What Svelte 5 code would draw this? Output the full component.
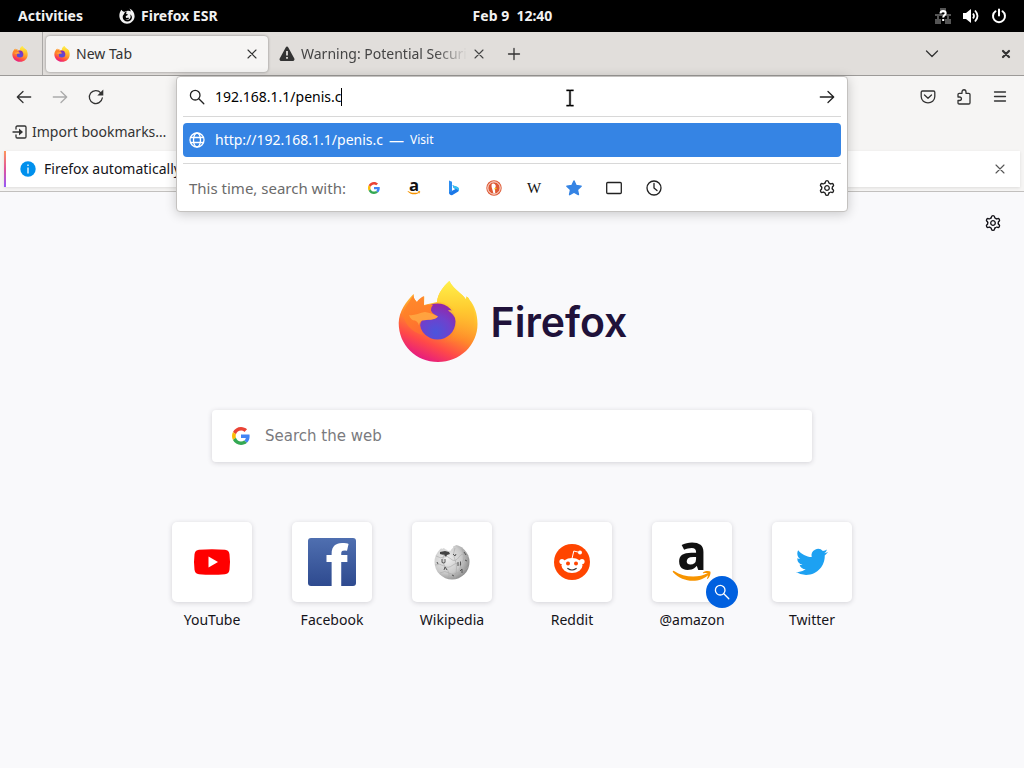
<script>
  let address = $state('192.168.1.1/penis.c')
  let query = $state('')

  const engines = ['Google', 'Amazon', 'Bing', 'DuckDuckGo', 'Wikipedia', 'Bookmarks', 'Tabs', 'History']
  const sites = ['YouTube', 'Facebook', 'Wikipedia', 'Reddit', '@amazon', 'Twitter']
  const teeth = [0, 60, 120, 180, 240, 300]
</script>


{#snippet firefox(size)}
  <svg width={size} height={size} viewBox="0 0 80 82" aria-hidden="true">
    <defs>
      <linearGradient id="flame" x1=".75" y1="0" x2=".3" y2="1">
        <stop offset="0" stop-color="#fff44f" />
        <stop offset=".32" stop-color="#ffc22e" />
        <stop offset=".58" stop-color="#ff8a2a" />
        <stop offset=".78" stop-color="#ff4a48" />
        <stop offset="1" stop-color="#e31587" />
      </linearGradient>
      <radialGradient id="globe" cx=".45" cy=".8" r=".8">
        <stop offset="0" stop-color="#4a55dc" />
        <stop offset=".55" stop-color="#7040cc" />
        <stop offset="1" stop-color="#9426a8" />
      </radialGradient>
      <linearGradient id="fox" x1=".2" y1="0" x2=".4" y2="1">
        <stop offset="0" stop-color="#ff8a2e" />
        <stop offset=".5" stop-color="#ff8028" />
        <stop offset="1" stop-color="#ff6a34" />
      </linearGradient>
      <linearGradient id="tail" x1=".5" y1="0" x2=".5" y2="1">
        <stop offset="0" stop-color="#fff04a" />
        <stop offset=".45" stop-color="#ffcb30" />
        <stop offset="1" stop-color="#ff8f2c" stop-opacity="0" />
      </linearGradient>
    </defs>
    <path fill="url(#flame)" d="M15.500 13C8 21 1 30 .7 42c0 22 17.300 39 39.300 39s39.500-17 39.500-38c0-10-3-19-8-24-.5-2-2-3-3-3.500l-.5 3C64 12 57 10 51.300 0 45 6 40 12 39 21l-13 3 .3-8.500c-3 1.500-5.500 3.500-7 6-2.500-2.500-4-5-3.800-8.500z" />
    <circle fill="url(#globe)" cx="39.500" cy="40.500" r="18" />
    <path fill="url(#tail)" d="M51.300 0C45 6 40 12 39 21c7-.5 13 2.500 18 9-3-1-5-1-7-.5 8 5 10 13 8 19-3 9-9 12-16 12.500 14 5 30-3 34-18 2-11-1-19-4.500-24-.5-2-2-3-3-3.500l-.5 3C64 12 57 10 51.300 0z" />
    <path fill="url(#fox)" d="M15.500 13C14.500 17 8 24 5 32c1 9 7 19 20 22-3-5-4-11-1-14.500 5-1 13 0 16-4-3-2-6-3-7-6 0-2 .5-4 2-5.500-4-1-6 0-9 .5l-.2-9.500c-3 1.500-5.500 3.500-7 6-2.500-2.500-3.500-5-3.300-8.500z" />
    <path fill="#ffbd4f" opacity=".6" d="M11 34c5 1 10-2 16-3 5 1 9 2 13 4.500-3 4-11 3-16 4-2 1-3 3-3 5-1-3-2-4-4-5-3 0-5-2-6-5.500z" />
  </svg>
{/snippet}

{#snippet gear()}
  <svg width="16" height="16" viewBox="-8 -8 16 16" class="line" aria-hidden="true">
    {#each teeth as angle}
      <path transform="rotate({angle})" d="M-2.100-4.900Q-1.600-5.200-1.500-6.300Q-1.300-7.300 0-7.300T1.500-6.300Q1.600-5.200 2.100-4.900Q2.600-4.500 3.190-4.270" />
    {/each}
    <circle r="2.300" />
  </svg>
{/snippet}

{#snippet magnifier()}
  <svg width="16" height="16" viewBox="0 0 16 16" class="line" aria-hidden="true">
    <circle cx="6.200" cy="6.200" r="4.800" />
    <path d="M9.800 9.800l5 5" />
  </svg>
{/snippet}

{#snippet cross()}
  <svg width="10" height="10" viewBox="0 0 10 10" class="line thin" aria-hidden="true">
    <path d="M1 1l8 8M9 1L1 9" />
  </svg>
{/snippet}

{#snippet google(size)}
  <svg width={size} height={size} viewBox="0 0 48 48" aria-hidden="true">
    <path fill="#ea4335" d="M24 9.500c3.540 0 6.710 1.220 9.210 3.600l6.850-6.850C35.900 2.380 30.470 0 24 0 14.620 0 6.510 5.380 2.560 13.220l7.980 6.190C12.430 13.720 17.740 9.500 24 9.500z" />
    <path fill="#4285f4" d="M46.980 24.550c0-1.570-.15-3.090-.38-4.550H24v9.020h12.940c-.58 2.960-2.260 5.480-4.780 7.180l7.730 6c4.510-4.180 7.090-10.360 7.090-17.650z" />
    <path fill="#fbbc05" d="M10.530 28.590c-.48-1.450-.76-2.990-.76-4.590s.27-3.140.76-4.590l-7.980-6.190C.92 16.460 0 20.120 0 24c0 3.880.92 7.540 2.560 10.780l7.970-6.190z" />
    <path fill="#34a853" d="M24 48c6.480 0 11.930-2.130 15.890-5.810l-7.730-6c-2.150 1.450-4.920 2.300-8.160 2.300-6.260 0-11.570-4.220-13.470-9.910l-7.980 6.190C6.510 42.620 14.620 48 24 48z" />
  </svg>
{/snippet}

{#snippet amazon(size)}
  <svg width={size} height={size} viewBox="0 0 48 48" aria-hidden="true">
    <text x="24" y="32" text-anchor="middle" class="amazon-a">a</text>
    <path fill="#f79400" d="M6 33c10 6.500 24 7.500 34 2 1-.5 1.800.7.9 1.500C32 45.500 15 45 5 34.300c-.7-.8.2-1.800 1-1.300z" />
    <path fill="#f79400" d="M35 34.500c2-1.600 6-1.800 7.200-.9 1 1.200-.3 5.500-2.400 7.200-.5.400-1 .1-.7-.5.700-1.600 1.500-4.100.9-4.800s-3-.5-4.500-.3c-.6 0-.9-.4-.5-.7z" />
  </svg>
{/snippet}


<div class="desktop">
  <header class="panel">
    <nav>
      <button>Activities</button>
      <button class="app">
        <svg width="16" height="16" viewBox="0 0 16 16" aria-hidden="true">
          <path fill="#f2f2f2" d="M2.300 1.800C.8 4 .2 6.300.4 8.500.8 12.700 4.200 15.700 8 15.700s7.600-3.200 7.600-7.500c0-3.500-2-6.300-5.200-7.700.9 1 1.300 2 1.300 3-.7-.5-1.500-.8-2.300-.8-1.300-.1-2.500.3-3.400 1-.4-.1-.8-.1-1.200 0-.9-.4-1.900-1-2.500-1.900z" />
          <path d="M8.300 3.500c-1 .7-1.300 1.700-1 2.600l1.700.4c-.3 1-1.600 1-2.200 1.700-.2.600-.1 1.100.4 1.600.9.500 1.900-.2 2.900.2-.8 1.500-2.700 2-4.200 1.200 2.200 1.500 5 .6 5.600-1.700.3-1.300 0-2.500-.7-3.300 1.600.7 2.400 2.200 2.100 3.900-.4 2.200-2.400 3.500-4.600 3.400-2.500-.1-4.500-2-4.600-4.300 0-1.200.4-2.300 1.300-3 .1-1.300 1.400-2.700 3.300-2.700z" />
        </svg>
        Firefox ESR
      </button>
    </nav>
    <button>Feb 9&nbsp; 12:40</button>
    <div class="status">
      <svg width="16" height="16" viewBox="0 0 16 16" aria-hidden="true">
        <path fill="#555" d="M5 0h6v5H5zM0 6h16v2H0zM0 11h6v5H0zM10 11h6v5h-6zM2 8h2v3H2zM12 8h2v3h-2z" />
        <path fill="none" stroke="#fff" stroke-width="2" d="M5.500 5.500C5.500 3.500 6.500 3 8 3s2.700.8 2.700 2.300C10.700 7 8.200 7 8.200 9.500M8.200 11v2" />
      </svg>
      <svg width="16" height="16" viewBox="0 0 16 16" aria-hidden="true">
        <path fill="#fff" d="M0 5h3l5-4v14l-5-4H0z" />
        <path fill="none" stroke="#fff" stroke-width="1.800" d="M10 5.500q2 2.500 0 5M12 2.500q5 5.500 0 11" />
      </svg>
      <svg width="16" height="16" viewBox="0 0 16 16" aria-hidden="true">
        <path fill="none" stroke="#fff" stroke-width="2" stroke-linecap="round" d="M8 1.500v6M4.500 3.300a6 6 0 1 0 7 0" />
      </svg>
    </div>
  </header>

  <div class="tabs">
    <button class="view" aria-label="Firefox View">{@render firefox(16)}</button>
    <div class="tab selected">
      {@render firefox(16)}
      <span class="title">New Tab</span>
      <button class="close" aria-label="Close tab">{@render cross()}</button>
    </div>
    <div class="tab">
      <svg width="16" height="16" viewBox="0 0 16 16" aria-hidden="true">
        <path fill="#333" d="M6.700 1.400c.6-1.100 2-1.100 2.600 0l6 11.200c.6 1.100-.1 2.400-1.300 2.400H2c-1.200 0-1.900-1.300-1.300-2.400z" />
        <path stroke="#e1dedb" stroke-width="1.800" d="M8 5v4.500M8 11v1.800" />
      </svg>
      <span class="title long">Warning: Potential Securi</span>
      <button class="close" aria-label="Close tab">{@render cross()}</button>
    </div>
    <button class="add" aria-label="New tab">
      <svg width="14" height="14" viewBox="0 0 14 14" class="line"><path d="M1.500 7h11M7 1.500v11" /></svg>
    </button>
    <button class="all" aria-label="List all tabs">
      <svg width="14" height="14" viewBox="0 0 14 14" class="line"><path d="M1.500 4L7 9.500 12.500 4" /></svg>
    </button>
    <button class="quit" aria-label="Close window">
      <svg width="10" height="10" viewBox="0 0 10 10" class="heavy"><path d="M2 2l6 6M8 2L2 8" /></svg>
    </button>
  </div>

  <div class="toolbar">
    <div class="history">
      <button aria-label="Back">
        <svg width="16" height="16" viewBox="0 0 16 16" class="line"><path d="M14.700 8H1.500M7 2.500L1.300 8 7 13.500" /></svg>
      </button>
      <button aria-label="Forward" disabled>
        <svg width="16" height="16" viewBox="0 0 16 16" class="line"><path d="M1.300 8h13.200M9 2.500L14.700 8 9 13.500" /></svg>
      </button>
      <button aria-label="Reload">
        <svg width="16" height="16" viewBox="0 0 16 16" class="line">
          <path d="M14.300 9A6.500 6.500 0 1 1 12.800 3.800" />
          <path fill="#333" stroke="none" d="M15.300.5v6H9.300z" />
        </svg>
      </button>
    </div>

    <div class="anchor">
      <div class="urlbar">
        <div class="address">
          {@render magnifier()}
          <input type="text" aria-label="Search or enter address" bind:value={address}>
          <span class="caret"></span>
          <button class="go" aria-label="Go">
            <svg width="16" height="16" viewBox="0 0 16 16" class="line"><path d="M1.300 8h13.200M9 2.500L14.700 8 9 13.500" /></svg>
          </button>
          <svg class="pointer" width="10" height="18" viewBox="0 0 10 20" aria-hidden="true">
            <path fill="none" stroke="#bbb" stroke-width="3" d="M1 1.500h3l1 1 1-1h3M5 2v16M1 18.500h3l1-1 1 1h3" />
            <path fill="none" stroke="#000" stroke-width="1.500" d="M1 1.500h3l1 1 1-1h3M5 2v16M1 18.500h3l1-1 1 1h3" />
          </svg>
        </div>
        <div class="results">
          <a class="result" href="http://{address}">
            <svg width="16" height="16" viewBox="0 0 16 16" class="line" aria-hidden="true">
              <circle cx="8" cy="8" r="7" />
              <ellipse cx="8" cy="8" rx="3.500" ry="7" />
              <path d="M1.500 5.500h13M1.500 10.500h13" />
            </svg>
            <span class="url">http://{address}</span>
            <span class="dash">—</span>
            <span class="action">Visit</span>
          </a>
        </div>
        <div class="oneoffs">
          <span>This time, search with:</span>
          <div class="engines">
            {#each engines as engine}
              <button aria-label={engine}>
                {#if engine === 'Google'}
                  {@render google(12)}
                {:else if engine === 'Amazon'}
                  {@render amazon(16)}
                {:else if engine === 'Bing'}
                  <svg width="16" height="16" viewBox="0 0 16 16">
                    <path fill="#2c8df0" d="M3 .5l3 1.200v9.100L3.500 13.500 3 13z" />
                    <path fill="#1b78e8" d="M3 12.500l6.500-3.500-1.800-1L6.500 5.200l5 1.800c1.500.8 1.800 3.300.8 4.500L6 15.300c-1.300.2-3-1-3-2.800z" />
                    <path fill="#35c3f0" d="M6.500 5.200l5 1.800c1.200.8 2 2.700 1.300 4-.5-1-1.300-1.500-2-1.800L7.700 8z" />
                  </svg>
                {:else if engine === 'DuckDuckGo'}
                  <svg width="16" height="16" viewBox="0 0 16 16">
                    <circle cx="8" cy="8" r="7.700" fill="#de5833" />
                    <circle cx="8" cy="8" r="6.200" fill="none" stroke="#fff" stroke-width=".9" />
                    <path fill="#fff" d="M5.500 4c2-1.200 4-.3 4.300 2L9 8.500l.2 4.700-1.700.3L5.900 8c-.4-1.400-.5-2.500-.1-3.200z" />
                    <path fill="#fdd20a" d="M8 8.500l2.500-.8v1L8.500 9.500z" />
                  </svg>
                {:else if engine === 'Wikipedia'}
                  <svg width="16" height="16" viewBox="0 0 16 16"><text x="8" y="13" text-anchor="middle" class="wiki-w">W</text></svg>
                {:else if engine === 'Bookmarks'}
                  <svg width="16" height="16" viewBox="0 0 16 16">
                    <path fill="#3584e4" stroke="#3584e4" stroke-width="1.500" stroke-linejoin="round" d="M8 1l2.100 4.600 5 .6-3.700 3.400 1 5L8 12.100l-4.400 2.500 1-5L.9 6.200l5-.6z" />
                  </svg>
                {:else if engine === 'Tabs'}
                  <svg width="16" height="16" viewBox="0 0 16 16" class="line"><rect x=".7" y="2.500" width="14.600" height="11" rx="1" /></svg>
                {:else}
                  <svg width="16" height="16" viewBox="0 0 16 16" class="line"><circle cx="8" cy="8" r="7" /><path d="M8 3.500V8l3 2.500" /></svg>
                {/if}
              </button>
            {/each}
          </div>
          <button class="settings" aria-label="Search settings">{@render gear()}</button>
        </div>
      </div>
    </div>

    <div class="extras">
      <button aria-label="Save to Pocket">
        <svg width="16" height="16" viewBox="0 0 16 16" class="line">
          <path d="M2.500 2h11c.8 0 1.300.5 1.300 1.300V7.500c0 8.500-13.600 8.500-13.600 0V3.300C1.200 2.500 1.700 2 2.500 2zM4.500 6L8 9.200 11.500 6" />
        </svg>
      </button>
      <button aria-label="Extensions">
        <svg width="16" height="16" viewBox="0 0 16 16" class="line">
          <path d="M2 5.500c0-.8.4-1.200 1.200-1.200H6V3c0-3 4-3 4 0v1.300h2.800c.8 0 1.200.4 1.200 1.200v8.300c0 .8-.4 1.200-1.200 1.200H3.200c-.8 0-1.200-.4-1.200-1.200V11.500h1.500c2.600 0 2.600-3.500 0-3.500H2z" />
        </svg>
      </button>
      <button aria-label="Menu">
        <svg width="16" height="16" viewBox="0 0 16 16" class="line"><path d="M2.500 3h11M2.500 7.500h11M2.500 12h11" /></svg>
      </button>
    </div>
  </div>

  <div class="bookmarks">
    <button>
      <svg width="16" height="16" viewBox="0 0 16 16" class="line" aria-hidden="true">
        <path d="M4 5V3.200C4 2.500 4.500 2 5.200 2h7.600c.7 0 1.200.5 1.200 1.200v9.600c0 .7-.5 1.200-1.200 1.200H5.200C4.500 14 4 13.500 4 12.800V11M1 8h8" />
        <path fill="#333" stroke="none" d="M7 4.500L11 8l-4 3.500z" />
      </svg>
      Import bookmarks…
    </button>
  </div>

  <div class="notice">
    <div class="message">
      <svg width="16" height="16" viewBox="0 0 16 16" aria-hidden="true">
        <circle cx="8" cy="8" r="7.700" fill="#0090ed" />
        <path stroke="#fff" stroke-width="1.300" d="M8 3.500v1.500M8 6.500v6" />
      </svg>
      <span>Firefox automatically</span>
      <button class="close" aria-label="Dismiss">{@render cross()}</button>
    </div>
  </div>

  <main>
    <div class="customize">
      <button aria-label="Personalize new tab">{@render gear()}</button>
    </div>

    <div class="brand">
      {@render firefox(82)}
      <span>Firefox</span>
    </div>

    <label class="search">
      {@render google(18)}
      <input type="search" placeholder="Search the web" aria-label="Search the web" bind:value={query}>
    </label>

    <div class="sites">
      {#each sites as site}
        <a href="#{site}">
          <div class="tile">
            {#if site === 'YouTube'}
              <svg width="36" height="26" viewBox="0 0 36 26">
                <path fill="#f00" d="M5 .8Q18-.5 31 .8q4 .4 4.500 4.500 1 7.700 0 15.400-.5 4.100-4.500 4.500-13 1.300-26 0-4-.4-4.500-4.500-1-7.700 0-15.400Q1 1.200 5 .8z" />
                <path fill="#fff" d="M14.500 7.500v11L24 13z" />
              </svg>
            {:else if site === 'Facebook'}
              <svg width="48" height="48" viewBox="0 0 48 48">
                <defs>
                  <linearGradient id="fb" x2="0" y2="1"><stop stop-color="#4f6fb0" /><stop offset="1" stop-color="#2e4a8f" /></linearGradient>
                </defs>
                <rect width="48" height="48" rx="3" fill="url(#fb)" />
                <text x="18" y="48" class="facebook-f">f</text>
              </svg>
            {:else if site === 'Wikipedia'}
              <svg width="36" height="36" viewBox="0 0 36 36">
                <defs>
                  <radialGradient id="puzzle" cx=".35" cy=".4" r=".7"><stop stop-color="#f0f0f0" /><stop offset=".6" stop-color="#cacaca" /><stop offset="1" stop-color="#858585" /></radialGradient>
                </defs>
                <circle cx="18" cy="18" r="17.500" fill="url(#puzzle)" />
                <path fill="#fff" d="M10 0h15l-6 2.500c1 2-2 2-2 4l-3 .5c-1-2-3-1-4-3L8 5 6 3z" />
                <path fill="#444" d="M6 8l5-1 4 1 1 2-3 1-1 2-2-2-4-1z" />
                <path fill="none" stroke="#aaa" stroke-width=".6" d="M2 12q5 3 8 1t7 2 8-2 9 0M1 21q5-2 9 1t9-1 8 2 8-1M6 29q5-3 9 0t8 0 6 0M10 10q-3 8 2 14t2 10M21 4q-3 6 0 12t0 19M28 5q4 8 0 14t0 12" />
                <path fill="none" stroke="#555" d="M8 15v3.500q2 1 3 0V15M19 10l2 2 1-2M24 18v4M26.500 17.500v4M10 26l1-3 2 3M26 27l2-2v4M30 8l2 3M3 18l1 2M31 16l2 1M18 31l2 1" />
              </svg>
            {:else if site === 'Reddit'}
              <svg width="36" height="36" viewBox="0 0 36 36">
                <circle cx="18" cy="18" r="18" fill="#ff4500" />
                <g fill="#fff">
                  <ellipse cx="18" cy="21.500" rx="10.500" ry="7.500" />
                  <circle cx="8" cy="17.500" r="2.600" />
                  <circle cx="28" cy="17.500" r="2.600" />
                  <circle cx="26" cy="8.500" r="2" />
                </g>
                <path fill="none" stroke="#fff" d="M18 14.500l1.800-7.500 6 1.500" />
                <circle cx="14" cy="19.500" r="2" fill="#ff4500" />
                <circle cx="22" cy="19.500" r="2" fill="#ff4500" />
                <path fill="none" stroke="#333" stroke-width="1.200" stroke-linecap="round" d="M13.800 24.500q4.200 3 8.400 0" />
              </svg>
            {:else if site === '@amazon'}
              {@render amazon(48)}
              <span class="badge">{@render magnifier()}</span>
            {:else}
              <svg width="32" height="32" viewBox="0 0 24 24">
                <path fill="#1da1f2" d="M23.953 4.570a10 10 0 01-2.825.775 4.958 4.958 0 002.163-2.723c-.951.555-2.005.959-3.127 1.184a4.920 4.920 0 00-8.384 4.482C7.690 8.095 4.067 6.130 1.640 3.162a4.822 4.822 0 00-.666 2.475c0 1.710.870 3.213 2.188 4.096a4.904 4.904 0 01-2.228-.616v.060a4.923 4.923 0 003.946 4.827 4.996 4.996 0 01-2.212.085 4.936 4.936 0 004.604 3.417 9.867 9.867 0 01-6.102 2.105c-.390 0-.779-.023-1.170-.067a13.995 13.995 0 007.557 2.209c9.053 0 13.998-7.496 13.998-13.985 0-.210 0-.420-.015-.630A9.935 9.935 0 0024 4.590z" />
              </svg>
            {/if}
          </div>
          {site}
        </a>
      {/each}
    </div>
  </main>
</div>


<style>

  :global(body) {
    margin: 0;
    background: #f9f9fb;
  }

  .desktop {
    min-height: 100vh;
    font: 14px/20px "Noto Sans", "Open Sans", sans-serif;
    color: #333;
    background: #f9f9fb;
  }

  svg {
    display: block;
    flex: none;
    overflow: visible;
  }

  button {
    display: flex;
    align-items: center;
    justify-content: center;
    margin: 0;
    padding: 0;
    border: 0;
    background: none;
    font: inherit;
    color: inherit;
  }

  input {
    box-sizing: border-box;
    margin: 0;
    padding: 0;
    border: 0;
    outline: 0;
    background: none;
    font: inherit;
    color: inherit;
  }

  a {
    color: inherit;
    text-decoration: none;
  }

  .line, .heavy {
    fill: none;
    stroke: currentColor;
    stroke-width: 1.3;
    stroke-linecap: round;
    stroke-linejoin: round;
  }

  .heavy {
    stroke-width: 2.2;
  }

  .thin {
    stroke-width: 1.1;
  }

  /* desktop top panel */

  .panel {
    display: grid;
    grid-template-columns: 1fr auto 1fr;
    align-items: center;
    height: 32px;
    padding: 0 17px 0 18px;
    background: #000;
    color: #f2f2f2;
    font-weight: 700;
  }

  .panel nav {
    display: flex;
    gap: 36px;
  }

  .app {
    gap: 6px;
  }

  .status {
    display: flex;
    justify-content: flex-end;
    gap: 12px;
  }

  /* tab strip */

  .tabs {
    display: flex;
    align-items: center;
    box-sizing: border-box;
    height: 44px;
    border-bottom: 1px solid #9c9a98;
    background: #e1dedb;
  }

  .view {
    align-self: stretch;
    box-sizing: border-box;
    width: 43px;
    padding-right: 3px;
    border-right: 1px solid #aaa8a6;
  }

  .tab {
    display: flex;
    align-items: center;
    box-sizing: border-box;
    gap: 6px;
    width: 222px;
    height: 36px;
    padding: 0 8px;
    border-radius: 4px;
    color: #444;
  }

  .selected {
    margin: 0 3px;
    background: #f6f5f4;
    box-shadow: 0 0 3px rgba(0, 0, 0, .4);
    color: #333;
  }

  .title {
    flex: 1;
    white-space: nowrap;
  }

  .long {
    mask-image: linear-gradient(to left, transparent, #000 32px);
  }

  .close {
    width: 16px;
    height: 24px;
  }

  .add {
    width: 32px;
    height: 32px;
    margin-left: 5px;
  }

  .all {
    width: 32px;
    height: 32px;
    margin-left: auto;
  }

  .quit {
    width: 36px;
    height: 32px;
    margin-left: 40px;
  }

  /* navigation */

  .toolbar {
    display: grid;
    grid-template-columns: 176px 1fr 176px;
    height: 42px;
    background: #f6f5f4;
  }

  .history, .extras {
    display: flex;
    align-items: center;
    gap: 4px;
    padding: 0 8px;
  }

  .extras {
    justify-content: flex-end;
  }

  .history button, .extras button {
    width: 32px;
    height: 32px;
  }

  .history button:disabled {
    color: #aaa;
  }

  /* the open address bar hangs over the rows below it */

  .anchor {
    position: relative;
  }

  .urlbar {
    position: absolute;
    z-index: 1;
    top: 0;
    left: 0;
    right: 0;
    padding: 0 6px;
    border: 1px solid #c4c2c0;
    border-radius: 4px;
    background: #fff;
    box-shadow: 0 2px 12px rgba(0, 0, 0, .2);
    box-sizing: border-box;
    color: #222;
  }

  .address {
    position: relative;
    display: flex;
    align-items: center;
    height: 39px;
    padding: 0 6px;
    border-bottom: 1px solid #d8d8d8;
  }

  .address input {
    field-sizing: content;
    height: 24px;
    margin-left: 10px;
    color: #000;
  }

  .caret {
    width: 1px;
    height: 18px;
    background: #000;
  }

  .go {
    width: 16px;
    height: 24px;
    margin-left: auto;
  }

  .pointer {
    position: absolute;
    top: 12px;
    left: 58%;
  }

  .results {
    padding: 6px 0;
    border-bottom: 1px solid #d8d8d8;
  }

  .result {
    display: flex;
    align-items: center;
    height: 34px;
    padding: 0 6px;
    border-radius: 4px;
    background: #3584e4;
    color: #fff;
  }

  .url {
    margin-left: 10px;
  }

  .dash {
    margin: 0 6px;
    font-size: 15px;
  }

  .action {
    font-size: 12px;
  }

  .oneoffs {
    display: flex;
    align-items: center;
    height: 47px;
    padding: 0 6px;
  }

  .oneoffs > span {
    font-size: 15px;
    color: #6b6b6b;
  }

  .engines {
    display: flex;
    gap: 8px;
    margin-left: 12px;
  }

  .engines button {
    width: 32px;
    height: 32px;
  }

  .settings {
    width: 16px;
    height: 32px;
    margin-left: auto;
  }

  .bookmarks {
    display: flex;
    align-items: center;
    height: 28px;
    padding: 0 12px;
    background: #f6f5f4;
  }

  .bookmarks button {
    gap: 4px;
  }

  .notice {
    padding: 5px 4px 4px;
    border-bottom: 1px solid #c2c0be;
    background: #f6f5f4;
  }

  .message {
    display: flex;
    align-items: center;
    gap: 8px;
    height: 36px;
    padding: 0 12px 0 14px;
    border-left: 2px solid;
    border-image: linear-gradient(#ff9a56, #e0539c, #9059ff) 1;
    background: #fff;
    box-shadow: 0 1px 3px rgba(0, 0, 0, .1);
    color: #15141a;
  }

  .message .close {
    margin-left: auto;
    color: #555;
  }

  /* new tab page */

  main {
    display: flex;
    flex-direction: column;
    align-items: center;
    color: #15141a;
  }

  .customize {
    display: flex;
    justify-content: flex-end;
    align-self: stretch;
    padding: 15px 15px 0;
  }

  .customize button {
    width: 32px;
    height: 32px;
  }

  .brand {
    display: flex;
    align-items: center;
    gap: 12px;
    margin-top: 42px;
    font: 600 41px/48px Inter, sans-serif;
    color: #20123a;
  }

  .search {
    display: flex;
    align-items: center;
    box-sizing: border-box;
    gap: 15px;
    width: 100%;
    max-width: 600px;
    height: 52px;
    margin-top: 47px;
    padding: 0 20px;
    border-radius: 4px;
    background: #fff;
    box-shadow: 0 1px 5px rgba(58, 57, 68, .2);
  }

  .search input {
    flex: 1;
    height: 32px;
    font: 15px "DejaVu Sans", sans-serif;
  }

  .search input::placeholder {
    color: #7a7a7e;
  }

  .sites {
    display: flex;
    gap: 40px;
    margin-top: 60px;
  }

  .sites a {
    display: flex;
    flex-direction: column;
    align-items: center;
    gap: 8px;
    width: 80px;
  }

  .tile {
    position: relative;
    display: flex;
    align-items: center;
    justify-content: center;
    width: 80px;
    height: 80px;
    border-radius: 5px;
    background: #fff;
    box-shadow: 0 1px 5px rgba(58, 57, 68, .2);
  }

  .badge {
    position: absolute;
    right: -6px;
    bottom: -6px;
    display: flex;
    align-items: center;
    justify-content: center;
    width: 32px;
    height: 32px;
    border-radius: 50%;
    background: #0060df;
    color: #fff;
  }

  .amazon-a {
    font: 700 50px "Open Sans", sans-serif;
    fill: #111;
  }

  .wiki-w {
    font: 15px "Liberation Serif", serif;
    fill: #111;
  }

  .facebook-f {
    font: 800 56px Inter, sans-serif;
    fill: #fff;
  }

</style>
